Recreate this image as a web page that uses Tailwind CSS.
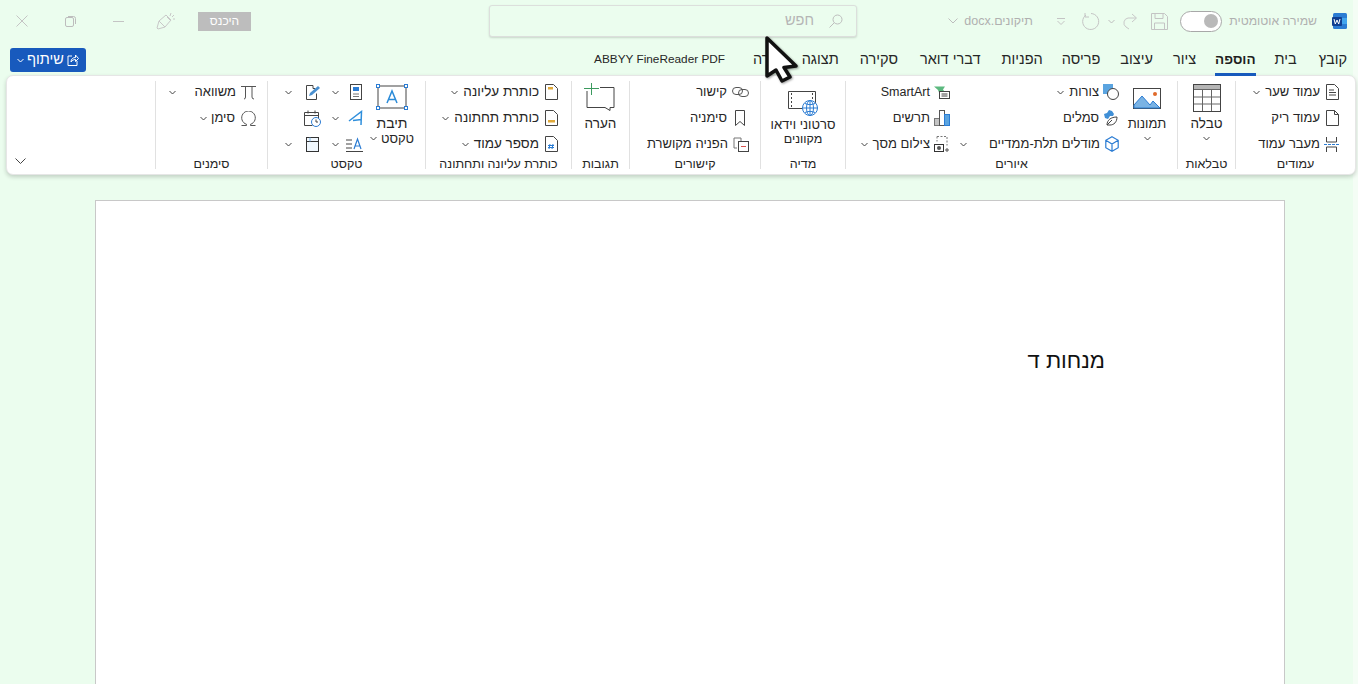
<!DOCTYPE html>
<html lang="he">
<head>
<meta charset="utf-8">
<script src="https://cdn.jsdelivr.net/npm/@tailwindcss/browser@4"></script>
</head>
<body class="bg-[#ebfdee]">
<div class="relative h-[684px] w-[1358px] overflow-hidden font-['Liberation_Sans',sans-serif] text-[13px] text-[#262626]">

<!-- faint right edge -->
<div class="absolute top-0 right-0 -z-10 h-full w-[5px] bg-[#f4fdf5]"></div>

<!-- title bar -->
<div class="flex h-[42px] items-center text-[#ababab]">
  <svg class="ml-[16px]" width="12" height="12" viewBox="0 0 12 12"><path d="M.5.5l11 11M11.5.5l-11 11" stroke="#c4c4c4" fill="none"/></svg>
  <svg class="ml-[37px]" width="11" height="11" viewBox="0 0 11 11"><rect x=".5" y="1.5" width="8" height="9" rx="1.5" fill="none" stroke="#bdbdbd"/><path d="M3 .5h5.5a2 2 0 0 1 2 2V8" fill="none" stroke="#bdbdbd"/></svg>
  <svg class="ml-[37px]" width="11" height="3" viewBox="0 0 11 3"><path d="M0 1.500h11" stroke="#c4c4c4"/></svg>
  <svg class="ml-[32px]" width="20" height="18" viewBox="0 0 20 18"><path d="M1 16l2-7 7-6 5 5-6 7-7 2zM3 9l6 6M11 5l3 3M15 1l-1 3M18 3l-2 2M19 7h-2" fill="none" stroke="#c8c8c8"/></svg>
  <div class="ml-[22px] flex h-[19px] w-[53px] items-center justify-center bg-[#bdbdbd] text-[12px] text-white" dir="rtl">היכנס</div>
  <div class="ml-[238px] flex h-[32px] w-[368px] items-center justify-end gap-[15px] rounded-[3px] border border-[#dcdfdc] bg-[#ebfdee] pr-[13px] shadow-[0_1px_2px_rgba(0,0,0,0.15)]">
    <span dir="rtl" class="text-[14.500px] text-[#b5b5b5]">חפש</span>
    <svg width="14" height="14" viewBox="0 0 14 14"><circle cx="8.500" cy="5.500" r="4.500" fill="none" stroke="#bdbdbd"/><path d="M5.300 8.700L.5 13.500" stroke="#bdbdbd"/></svg>
  </div>
  <svg class="ml-[91px]" width="10" height="6" viewBox="0 0 10 6"><path d="M.5.5L5 5 9.500.5" fill="none" stroke="#bdbdbd"/></svg>
  <span class="ml-[4px] w-[71px] text-right whitespace-nowrap text-[12.500px] text-[#b0b0b0]" dir="rtl">תיקונים.docx</span>
  <svg class="ml-[24px]" width="8" height="7" viewBox="0 0 8 7"><path d="M0 .5h8M.5 3l3.500 3.500L7.500 3" fill="none" stroke="#c4c4c4"/></svg>
  <svg class="ml-[17px]" width="18" height="18" viewBox="0 0 18 18"><path d="M4 3a8 8 0 1 0 5-1.500M3 1v4h4" fill="none" stroke="#c4c4c4"/></svg>
  <svg class="ml-[8px]" width="7" height="5" viewBox="0 0 7 5"><path d="M.5 1l3 3 3-3" fill="none" stroke="#bdbdbd"/></svg>
  <svg class="ml-[7px]" width="16" height="17" viewBox="0 0 16 17"><path d="M14 5H6a5 5 0 0 0-2 9l3 2M10 1l4.500 4L10 9" fill="none" stroke="#c8c8c8"/></svg>
  <svg class="ml-[13px]" width="17" height="17" viewBox="0 0 17 17"><path d="M.5.5h13l3 3v13H.5zM4 .5v5h8v-5M3.500 16.500V10h10v6.500" fill="none" stroke="#c4c4c4"/></svg>
  <div class="ml-[12px] flex h-[21px] w-[42px] items-center justify-end rounded-full border border-[#a8a8a8] bg-white pr-[3px]"><span class="size-[14px] rounded-full bg-[#b9b9b9]"></span></div>
  <span class="ml-[7px] w-[88px] whitespace-nowrap text-[12.250px] text-[#b0b0b0]" dir="rtl">שמירה אוטומטית</span>
  <svg class="ml-[15px]" width="15" height="16" viewBox="0 0 15 16"><rect x="1" y="0" width="14" height="16" rx="1.500" fill="#2b7cd3"/><rect x="5" y="5" width="10" height="6" fill="#41a5ee"/><rect x="0" y="4" width="10" height="9" rx="1" fill="#103f91"/><path d="M2 6l1.300 5L5 7l1.700 4L8 6" fill="none" stroke="#fff"/></svg>
</div>

<!-- tabs row -->
<div class="mt-[6px] flex h-[24px] items-center">
  <div class="ml-[10px] flex h-[24px] w-[76px] items-center justify-center gap-[3px] rounded-[3px] bg-[#185abd] text-[14.500px] text-white">
    <svg width="7" height="5" viewBox="0 0 7 5"><path d="M.5 1l3 3 3-3" fill="none" stroke="#fff"/></svg>
    <span dir="rtl">שיתוף</span>
    <svg width="12" height="12" viewBox="0 0 12 12"><path d="M5 2H1v9.500h9V7M4 8c0-3 2-4.500 4.500-4.500V1L11.500 4.500 8.500 7.500V5.500C6.500 5.500 5 6.500 4 8z" fill="none" stroke="#fff"/></svg>
  </div>
  <div class="ml-auto flex h-[24px] items-center gap-[19px] pr-[11px] text-[14.500px]">
    <span class="text-[11.800px]">ABBYY FineReader PDF</span>
    <span dir="rtl" class="ml-[9px]">עזרה</span>
    <span dir="rtl" class="mr-[2px]">תצוגה</span>
    <span dir="rtl" class="mr-[3px]">סקירה</span>
    <span dir="rtl" class="mr-[2px]">דברי דואר</span>
    <span dir="rtl">הפניות</span>
    <span dir="rtl" class="mr-[1px]">פריסה</span>
    <span dir="rtl" class="mr-[1px]">עיצוב</span>
    <span dir="rtl">ציור</span>
    <span dir="rtl" class="relative text-[13.500px] font-bold text-[#1f1f1f]">הוספה<span class="absolute right-0 bottom-[-6px] left-0 h-[3px] bg-[#185abd]"></span></span>
    <span dir="rtl" class="mr-[3px]">בית</span>
    <span dir="rtl">קובץ</span>
  </div>
</div>

<!-- ribbon -->
<div class="mt-[3px] ml-[6px] flex h-[100px] w-[1350px] rounded-[7px] border border-[#e6e6e6] bg-white pt-[5px] shadow-[0_2px_4px_rgba(0,0,0,0.18)]">

  <!-- spacer with collapse -->
  <div class="flex h-[88px] w-[148px] items-end pb-[5px] pl-[8px]">
    <svg width="11" height="6" viewBox="0 0 11 6"><path d="M.5.500l5 5 5-5" fill="none" stroke="#444"/></svg>
  </div>

  <!-- סימנים -->
  <div class="flex h-[88px] w-[113px] flex-col border-x border-[#e1e1e1]">
    <div class="flex h-[74px] flex-col gap-[4px] pr-[11px]">
      <div class="flex h-[22px] items-center justify-end">
        <svg class="mr-[19px]" width="7" height="5" viewBox="0 0 7 5"><path d="M.5 1l3 3 3-3" fill="none" stroke="#444"/></svg>
        <span dir="rtl" class="mr-[5px]">משוואה</span>
        <svg width="15" height="15" viewBox="0 0 15 15"><path d="M0 1.500h15M4.500 1.500V12q0 2-1.500 2M11 1.500V12q0 2 2 2" fill="none" stroke="#555"/></svg>
      </div>
      <div class="flex h-[22px] items-center justify-end">
        <svg class="mr-[4px]" width="7" height="5" viewBox="0 0 7 5"><path d="M.5 1l3 3 3-3" fill="none" stroke="#444"/></svg>
        <span dir="rtl" class="mr-[6px]">סימן</span>
        <svg width="15" height="15" viewBox="0 0 15 15"><path d="M.5 14.500h5v-1.200A6.800 6.800 0 1 1 9.500 13.300v1.200h5" fill="none" stroke="#555"/></svg>
      </div>
    </div>
    <div dir="rtl" class="h-[14px] text-center text-[12.500px] leading-[18px]">סימנים</div>
  </div>

  <!-- טקסט -->
  <div class="flex h-[88px] w-[158px] flex-col border-r border-[#e1e1e1]">
    <div class="flex h-[74px] justify-end pr-[11px]">
      <div class="flex w-[36px] flex-col gap-[4px]">
        <div class="flex h-[22px] items-center justify-between"><svg width="7" height="5" viewBox="0 0 7 5"><path d="M.5 1l3 3 3-3" fill="none" stroke="#444"/></svg>
          <svg width="17" height="17" viewBox="0 0 17 17"><path d="M9 1.500H2.500v14h10v-6M9 1.500v3h2" fill="none" stroke="#444"/><path d="M5 12l1-3 8-7 2 2-8 7z" fill="#4a90d0"/></svg></div>
        <div class="flex h-[22px] items-center justify-end">
          <svg width="17" height="17" viewBox="0 0 17 17"><path d="M.5 2.500h14M.5 5.500h14M.5 2.500v13h8M14.500 2.500v6M4 .5v3M11 .5v3" fill="none" stroke="#444"/><circle cx="12" cy="12" r="4.500" fill="#fff" stroke="#2b7cd3"/><path d="M12 9.500V12h2" fill="none" stroke="#444"/></svg></div>
        <div class="flex h-[22px] items-center justify-between"><svg width="7" height="5" viewBox="0 0 7 5"><path d="M.5 1l3 3 3-3" fill="none" stroke="#444"/></svg>
          <svg class="mr-[2px]" width="13" height="15" viewBox="0 0 13 15"><rect x=".5" y=".5" width="12" height="14" fill="#f0f7fd" stroke="#333"/><path d="M.5 4.500h12" stroke="#333" fill="none"/><path d="M4 .5v4" stroke="#7fb6e6"/></svg></div>
      </div>
      <div class="ml-[11px] flex w-[31px] flex-col gap-[4px]">
        <div class="flex h-[22px] items-center justify-between"><svg width="7" height="5" viewBox="0 0 7 5"><path d="M.5 1l3 3 3-3" fill="none" stroke="#444"/></svg>
          <svg class="mr-[1px]" width="12" height="16" viewBox="0 0 12 16"><rect x=".5" y=".5" width="11" height="15" fill="none" stroke="#444"/><rect x="3" y="3" width="6" height="4" fill="#2b7cd3"/><path d="M3 10h6M3 12.500h6" stroke="#777"/></svg></div>
        <div class="flex h-[22px] items-center justify-between"><svg width="7" height="5" viewBox="0 0 7 5"><path d="M.5 1l3 3 3-3" fill="none" stroke="#444"/></svg>
          <svg width="15" height="16" viewBox="0 0 15 16"><path d="M1 11L13.500 1.500 13 15M5 10.500l8.500-1" fill="none" stroke="#2f8fdc" stroke-width="1.500"/></svg></div>
        <div class="flex h-[22px] items-center justify-between"><svg width="7" height="5" viewBox="0 0 7 5"><path d="M.5 1l3 3 3-3" fill="none" stroke="#444"/></svg>
          <svg width="17" height="15" viewBox="0 0 17 15"><path d="M0 3h6M0 7h6M0 11h6M0 14.500h17" stroke="#444"/><path d="M8 12l3.500-10L15 12M9.200 9h4.600" fill="none" stroke="#2b7cd3" stroke-width="1.200"/></svg></div>
      </div>
      <div class="ml-[7px] flex w-[44px] flex-col items-center pt-[3px]">
        <svg width="32" height="26" viewBox="0 0 32 26"><rect x="2" y="2" width="28" height="22" fill="none" stroke="#444"/><path d="M11 19l5-12 5 12M12.500 15.500h7" fill="none" stroke="#2b8bd8" stroke-width="1.500"/><g fill="#fff" stroke="#2b7cd3"><rect x=".5" y=".5" width="3" height="3"/><rect x="28.500" y=".5" width="3" height="3"/><rect x=".5" y="22.500" width="3" height="3"/><rect x="28.500" y="22.500" width="3" height="3"/></g></svg>
        <span dir="rtl" class="mt-[6px] text-[14px] leading-[15px]">תיבת</span>
        <div class="flex items-center gap-[4px] leading-[15px]"><svg width="7" height="5" viewBox="0 0 7 5"><path d="M.5 1l3 3 3-3" fill="none" stroke="#444"/></svg><span dir="rtl">טקסט</span></div>
      </div>
    </div>
    <div dir="rtl" class="h-[14px] text-center text-[12.500px] leading-[18px]">טקסט</div>
  </div>

  <!-- כותרת -->
  <div class="flex h-[88px] w-[146px] flex-col border-r border-[#e1e1e1]">
    <div class="flex h-[74px] flex-col gap-[4px] pr-[13px] text-[13.500px]">
      <div class="flex h-[22px] items-center justify-end gap-[6px]">
        <svg class="-mr-[1px]" width="7" height="5" viewBox="0 0 7 5"><path d="M.5 1l3 3 3-3" fill="none" stroke="#444"/></svg>
        <span dir="rtl">כותרת עליונה</span>
        <svg width="13" height="16" viewBox="0 0 13 16"><path d="M.5.5h8l4 4v11H.5z" fill="#fff" stroke="#444"/><rect x="3" y="3" width="5" height="2.500" fill="#e0a93b"/></svg>
      </div>
      <div class="flex h-[22px] items-center justify-end gap-[6px]">
        <svg class="-mr-[1px]" width="7" height="5" viewBox="0 0 7 5"><path d="M.5 1l3 3 3-3" fill="none" stroke="#444"/></svg>
        <span dir="rtl">כותרת תחתונה</span>
        <svg width="13" height="16" viewBox="0 0 13 16"><path d="M.5.5h8l4 4v11H.5z" fill="#fff" stroke="#444"/><rect x="3" y="10" width="7" height="2.500" fill="#e0a93b"/></svg>
      </div>
      <div class="flex h-[22px] items-center justify-end gap-[6px]">
        <svg class="-mr-[1px]" width="7" height="5" viewBox="0 0 7 5"><path d="M.5 1l3 3 3-3" fill="none" stroke="#444"/></svg>
        <span dir="rtl">מספר עמוד</span>
        <svg width="13" height="16" viewBox="0 0 13 16"><path d="M.5.5h8l4 4v11H.5z" fill="#fff" stroke="#444"/><path d="M5 8l-1 5M8 8l-1 5M3 9.500h6M3 11.500h6" stroke="#2b7cd3" fill="none"/></svg>
      </div>
    </div>
    <div dir="rtl" class="h-[14px] text-center text-[12.500px] leading-[18px]">כותרת עליונה ותחתונה</div>
  </div>

  <!-- תגובות -->
  <div class="flex h-[88px] w-[58px] flex-col border-r border-[#e1e1e1]">
    <div class="flex h-[74px] flex-col items-center pt-[2px]">
      <svg class="-ml-[2px]" width="31" height="28" viewBox="0 0 31 28"><path d="M3 4.500h27v20h-4v3l-5-3H3z" fill="none" stroke="#444"/><rect x="0" y="3" width="16" height="5" fill="#fff"/><path d="M0 5.500h15M7.500 0v12" stroke="#3c9a5f" fill="none"/></svg>
      <span dir="rtl" class="mt-[5px] text-[13.500px] leading-[15px]">הערה</span>
    </div>
    <div dir="rtl" class="h-[14px] text-center text-[12.500px] leading-[18px]">תגובות</div>
  </div>

  <!-- קישורים -->
  <div class="flex h-[88px] w-[131px] flex-col border-r border-[#e1e1e1]">
    <div class="flex h-[74px] flex-col gap-[4px] pr-[11px]">
      <div class="flex h-[22px] items-center justify-end gap-[5px]">
        <span dir="rtl">קישור</span>
        <svg width="17" height="12" viewBox="0 0 17 12"><rect x=".5" y="1.500" width="10" height="7" rx="3.500" fill="none" stroke="#555"/><rect x="6.500" y="3.500" width="10" height="7" rx="3.500" fill="none" stroke="#555"/></svg>
      </div>
      <div class="flex h-[22px] items-center justify-end gap-[8px] pr-[4px]">
        <span dir="rtl">סימניה</span>
        <svg width="10" height="16" viewBox="0 0 10 16"><path d="M.5.5h9v15L5 11.500.5 15.500z" fill="none" stroke="#444"/></svg>
      </div>
      <div class="flex h-[22px] items-center justify-end gap-[5px]">
        <span dir="rtl">הפניה מקושרת</span>
        <svg width="16" height="15" viewBox="0 0 16 15"><path d="M1 1h7v3M1 1v10h3" fill="none" stroke="#777"/><rect x="5.500" y="4.500" width="10" height="10" fill="#fff" stroke="#444"/><path d="M8 9.500h5" stroke="#d9534f"/></svg>
      </div>
    </div>
    <div dir="rtl" class="h-[14px] text-center text-[12.500px] leading-[18px]">קישורים</div>
  </div>

  <!-- מדיה -->
  <div class="flex h-[88px] w-[85px] flex-col border-r border-[#e1e1e1]">
    <div class="flex h-[74px] flex-col items-center pt-[8px]">
      <svg width="30" height="27" viewBox="0 0 30 27"><path d="M.5 2.500h27v15M.5 2.500v17h19" fill="none" stroke="#444"/><path d="M3.500 4v14M24.500 4v9" stroke="#444" stroke-dasharray="2 2"/><circle cx="22" cy="19" r="7.500" fill="#fff" stroke="#2b7cd3"/><path d="M14.500 19h15M22 11.500v15M17 14.500c3 1.500 7 1.500 10 0M17 23.500c3-1.500 7-1.500 10 0" fill="none" stroke="#2b7cd3"/><ellipse cx="22" cy="19" rx="3.500" ry="7.500" fill="none" stroke="#2b7cd3"/></svg>
      <span dir="rtl" class="mt-[1px] text-[13px] leading-[15px] whitespace-nowrap">סרטוני וידאו</span>
      <span dir="rtl" class="text-[12.500px] leading-[15px]">מקוונים</span>
    </div>
    <div dir="rtl" class="h-[14px] text-center text-[12.500px] leading-[18px]">מדיה</div>
  </div>

  <!-- איורים -->
  <div class="flex h-[88px] w-[332px] flex-col border-r border-[#e1e1e1]">
    <div class="flex h-[74px]">
      <div class="flex w-[104px] flex-col gap-[4px]">
        <div class="flex h-[22px] items-center justify-end gap-[4px]">
          <span class="text-[12.500px]">SmartArt</span>
          <svg width="16" height="13" viewBox="0 0 16 13"><path d="M0 .5h11l-2 3 2 3H5L4 4z" fill="#5cb97f"/><rect x="5.500" y="5.500" width="10" height="7" fill="#fff" stroke="#444"/><path d="M7.500 8h6M7.500 10h6" stroke="#444"/></svg>
        </div>
        <div class="flex h-[22px] items-center justify-end gap-[4px]">
          <span dir="rtl">תרשים</span>
          <svg width="16" height="16" viewBox="0 0 16 16"><rect x=".5" y="8.500" width="5" height="7" fill="#c4c4c4" stroke="#777"/><rect x="5.500" y=".5" width="5" height="15" fill="#fff" stroke="#555"/><rect x="10.500" y="4.500" width="5" height="11" fill="#5ba4e0" stroke="#2b7cd3"/></svg>
        </div>
        <div class="flex h-[22px] items-center justify-end gap-[4px]">
          <svg class="mr-[1px]" width="7" height="5" viewBox="0 0 7 5"><path d="M.5 1l3 3 3-3" fill="none" stroke="#444"/></svg>
          <span dir="rtl">צילום מסך</span>
          <svg width="16" height="16" viewBox="0 0 16 16"><path d="M3 .5h10v9M3 .5v5" fill="none" stroke="#777" stroke-dasharray="2 1.500"/><rect x=".5" y="8.500" width="9" height="7" fill="#fff" stroke="#333"/><circle cx="5" cy="12" r="2" fill="#555"/><path d="M13 12v4M11 14h4" stroke="#555"/></svg>
        </div>
      </div>
      <div class="flex w-[169px] flex-col gap-[4px]">
        <div class="flex h-[22px] items-center justify-end gap-[4px]">
          <svg class="mr-[1px]" width="7" height="5" viewBox="0 0 7 5"><path d="M.5 1l3 3 3-3" fill="none" stroke="#444"/></svg>
          <span dir="rtl">צורות</span>
          <svg width="16" height="16" viewBox="0 0 16 16"><rect x="0" y="0" width="10" height="10" fill="#5ba4e0"/><circle cx="10" cy="10" r="5.500" fill="#fff" stroke="#444"/></svg>
        </div>
        <div class="flex h-[22px] items-center justify-end gap-[4px]">
          <span dir="rtl">סמלים</span>
          <svg width="16" height="16" viewBox="0 0 16 16"><path d="M1 4l3-1 2-3 3 1 2 3-1 2-3 0-2 3-3-1z" fill="#3f8fd6"/><path d="M4 15c0-5 4-8 10-8 0 5-3 8-7 8zM4 15l5-5" fill="#fff" stroke="#444"/></svg>
        </div>
        <div class="flex h-[22px] items-center justify-end">
          <svg class="mr-[22px]" width="7" height="5" viewBox="0 0 7 5"><path d="M.5 1l3 3 3-3" fill="none" stroke="#444"/></svg>
          <span dir="rtl" class="mr-[5px]">מודלים תלת-ממדיים</span>
          <svg width="14" height="16" viewBox="0 0 14 16"><path d="M7 .8l6.200 3.500v7.400L7 15.200.8 11.700V4.300zM.8 4.300L7 8l6.200-3.700M7 8v7" fill="none" stroke="#2b7cd3" stroke-width="1.200"/></svg>
        </div>
      </div>
      <div class="ml-[8px] flex w-[40px] flex-col items-center pt-[7px]">
        <svg width="28" height="21" viewBox="0 0 28 21"><rect x=".5" y=".5" width="27" height="20" fill="#fff" stroke="#444"/><path d="M1 17l8-9 8 9 3-4 7 7H1z" fill="#7ab3e4" stroke="#2b7cd3"/><circle cx="22" cy="6" r="2" fill="#e06a2b"/></svg>
        <span dir="rtl" class="mt-[7px] leading-[15px]">תמונות</span>
        <svg class="mt-[5px]" width="7" height="5" viewBox="0 0 7 5"><path d="M.5 1l3 3 3-3" fill="none" stroke="#444"/></svg>
      </div>
    </div>
    <div dir="rtl" class="h-[14px] text-center text-[12.500px] leading-[18px]">איורים</div>
  </div>

  <!-- טבלאות -->
  <div class="flex h-[88px] w-[58px] flex-col border-r border-[#e1e1e1]">
    <div class="flex h-[74px] flex-col items-center pt-[3px]">
      <svg width="28" height="28" viewBox="0 0 28 28"><rect x=".5" y=".5" width="27" height="27" fill="#fff" stroke="#444"/><rect x="1" y="1" width="26" height="4.500" fill="#b5b5b5"/><path d="M1 5.500h26M1 13h26M1 20h26M9.500 5.500V27M18.500 5.500V27" stroke="#666" fill="none"/></svg>
      <span dir="rtl" class="mt-[4px] text-[13.500px] leading-[15px]">טבלה</span>
      <svg class="mt-[5px]" width="7" height="5" viewBox="0 0 7 5"><path d="M.5 1l3 3 3-3" fill="none" stroke="#444"/></svg>
    </div>
    <div dir="rtl" class="h-[14px] text-center text-[12.500px] leading-[18px]">טבלאות</div>
  </div>

  <!-- עמודים -->
  <div class="flex h-[88px] flex-1 flex-col">
    <div class="flex h-[74px] flex-col gap-[4px] pr-[16px]">
      <div class="flex h-[22px] items-center justify-end gap-[6px]">
        <svg class="-mr-[1px]" width="7" height="5" viewBox="0 0 7 5"><path d="M.5 1l3 3 3-3" fill="none" stroke="#444"/></svg>
        <span dir="rtl">עמוד שער</span>
        <svg width="13" height="16" viewBox="0 0 13 16"><path d="M.5.5h8l4 4v11H.5zM3 6h5M3 8.500h7M3 11h7" fill="none" stroke="#444"/></svg>
      </div>
      <div class="flex h-[22px] items-center justify-end gap-[6px]">
        <span dir="rtl">עמוד ריק</span>
        <svg width="13" height="16" viewBox="0 0 13 16"><path d="M.5.5h8l4 4v11H.5zM8.500.5v4h4" fill="none" stroke="#444"/></svg>
      </div>
      <div class="flex h-[22px] items-center justify-end gap-[4px]">
        <span dir="rtl">מעבר עמוד</span>
        <svg width="15" height="15" viewBox="0 0 15 15"><path d="M2.500 0v5h10V0M2.500 15v-5h10v5" fill="none" stroke="#444"/><path d="M0 7.500h15" stroke="#2b7cd3" stroke-dasharray="3 1"/></svg>
      </div>
    </div>
    <div dir="rtl" class="h-[14px] text-center text-[12.500px] leading-[18px]">עמודים</div>
  </div>
</div>

<!-- document page -->
<div class="mt-[25px] ml-[95px] h-[500px] w-[1190px] border border-[#c8c8c8] bg-white pt-[147px] pr-[179px]">
  <p dir="rtl" class="text-[22px] leading-[26px] text-[#111]">מנחות ד</p>
</div>

<!-- mouse pointer -->
<svg class="absolute top-[35px] left-[764px] drop-shadow-[1px_1px_1px_rgba(0,0,0,0.4)]" width="38" height="50" viewBox="0 0 38 50"><path d="M3 3v38l9-6 6 11 8-4-6-9.500L32 31z" fill="#fff" stroke="#111" stroke-width="3.500" stroke-linejoin="round"/></svg>

</div>
</body>
</html>
